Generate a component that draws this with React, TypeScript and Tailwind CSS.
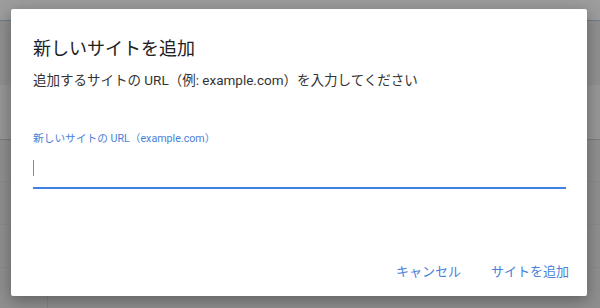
export default function App() {
  return (
    <div
      className="relative w-[600px] h-[308px] overflow-hidden bg-[#8f8f8f]"
      style={{ fontFamily: 'Roboto, "Noto Sans CJK JP", sans-serif' }}
    >
      {/* Dimmed page behind the dialog */}
      <div className="flex flex-col h-full">
        <div className="h-[21px] bg-[#9d9d9d] border-b border-[#6f7a92]" />
        <div className="h-[64px] bg-[#909090]" />
        <div className="h-[55px] bg-[#979797] border-b border-[#7d7d7d]" />
        <div className="h-[42px] border-b border-[#8a8a8a]" />
        <div className="h-[43px] border-b border-[#8a8a8a]" />
        <div className="h-[43px] border-b border-[#8a8a8a]" />
        <div className="flex-1 ml-[47px] border-l border-[#848484]" />
      </div>

      {/* Dialog */}
      <div className="absolute left-[11px] top-[9px] w-[576px] h-[287px] bg-white rounded-[2px] shadow-[0_4px_16px_rgba(0,0,0,0.35)] flex flex-col">
        <div className="pl-[22px] pr-[21px] pt-[28px]">
          <h2 className="text-[18px] leading-[24px] text-[#212121] font-normal">
            新しいサイトを追加
          </h2>
          <p className="mt-[9px] text-[13.5px] leading-[20px] text-[#333333]">
            追加するサイトの URL（例: example.com）を入力してください
          </p>

          {/* Text field */}
          <label className="block mt-[41px] text-[10.7px] leading-[16px] text-[#4a80d9]">
            新しいサイトの URL（example.com）
          </label>
          <div className="h-[42px] border-b-2 border-[#3f7fe6] flex items-start">
            <span className="mt-[13px] w-px h-[16px] bg-[#8a8a8a]" />
          </div>
        </div>

        {/* Actions */}
        <div className="mt-auto flex justify-end gap-[30px] pr-[18px] pb-[14px]">
          <button className="text-[13px] leading-[20px] text-[#4a80d9]">キャンセル</button>
          <button className="text-[13px] leading-[20px] text-[#4a80d9]">サイトを追加</button>
        </div>
      </div>
    </div>
  );
}
